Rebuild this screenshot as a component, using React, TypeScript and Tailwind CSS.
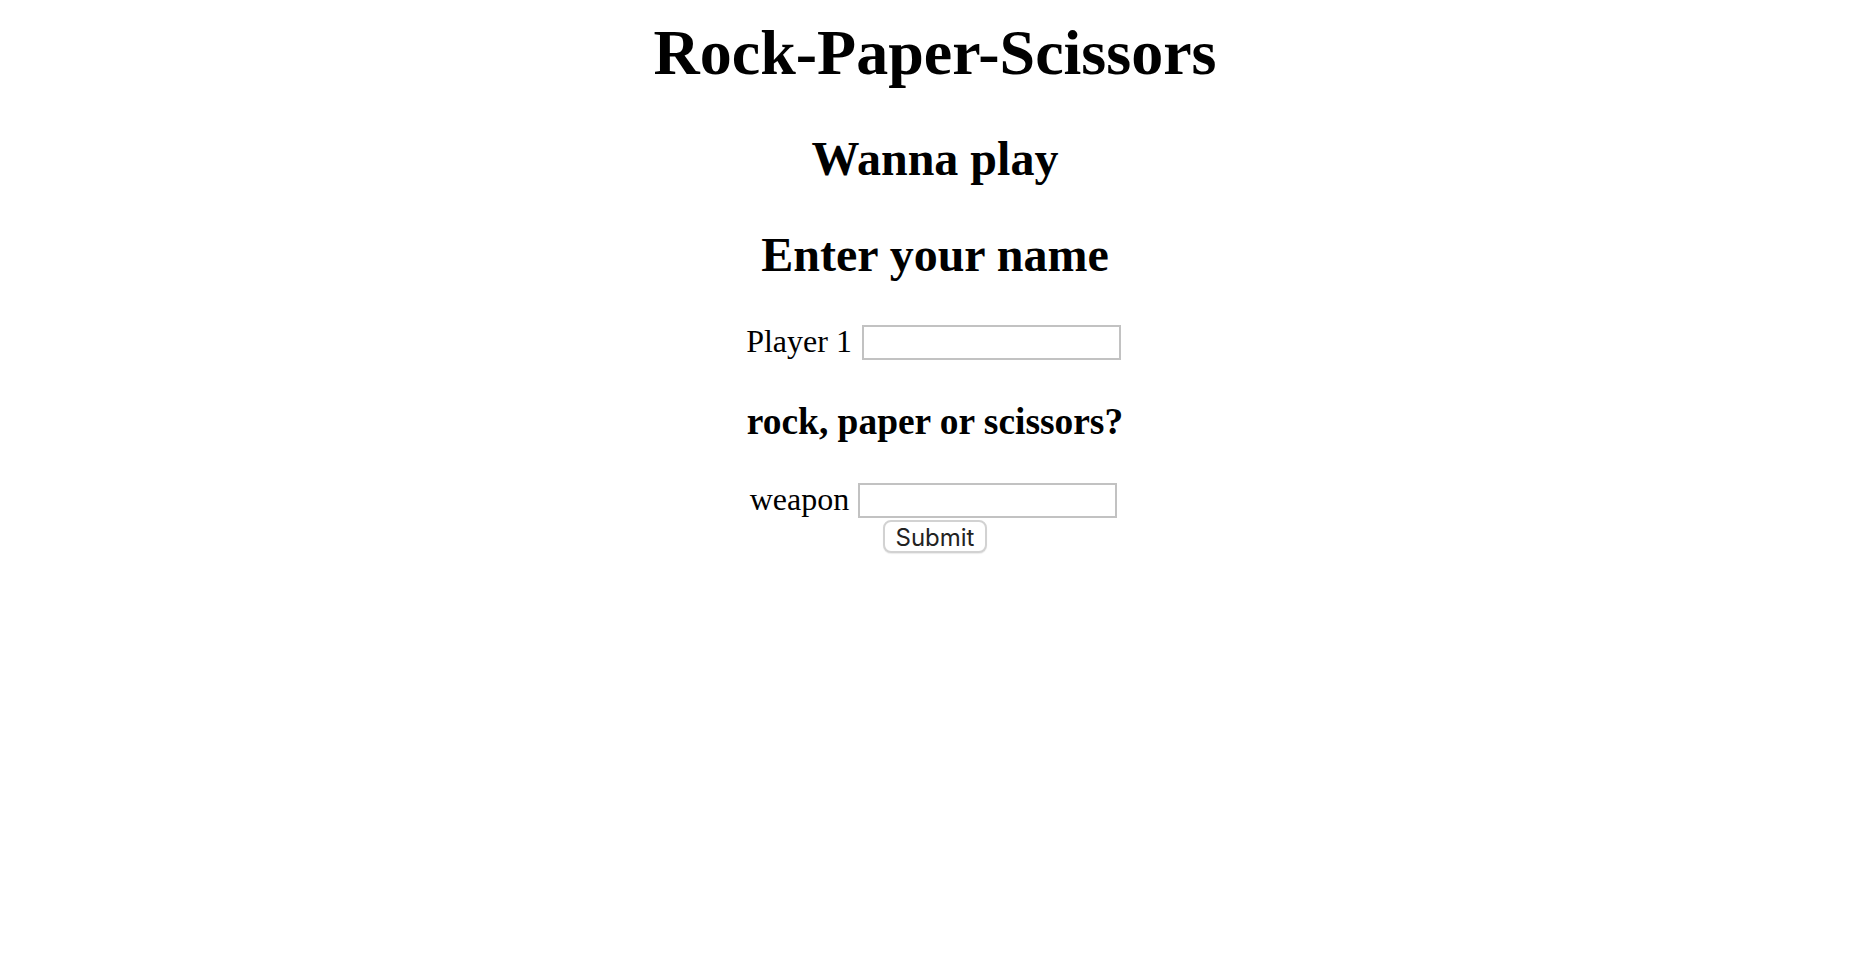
export default function App() {
  return (
    <div className="min-h-screen bg-white pr-[6px] pt-[17px] text-center text-black [font-family:'Liberation_Serif','Times_New_Roman',serif]">
      <h1 className="text-[64px] font-bold leading-[71px]">Rock-Paper-Scissors</h1>

      <h2 className="mt-[44px] text-[48px] font-bold leading-[53px]">Wanna play</h2>

      <h2 className="mt-[43px] text-[48px] font-bold leading-[53px]">Enter your name</h2>

      <form className="flex flex-col items-center" onSubmit={(e) => e.preventDefault()}>
        <div className="mt-[42px] mr-[3px] flex h-[37px] items-end justify-center gap-[10px]">
          <label className="text-[32px] leading-[37px]">Player 1</label>
          <input
            type="text"
            className="h-[35px] w-[259px] border-2 border-[#c2c2c2] bg-white px-1 text-[26px] outline-none"
          />
        </div>

        <h3 className="mt-[41px] text-[37.44px] font-bold leading-[41px]">rock, paper or scissors?</h3>

        <div className="mt-[39px] mr-[3px] flex h-[37px] items-end justify-center gap-[9px]">
          <label className="text-[32px] leading-[37px]">weapon</label>
          <input
            type="text"
            className="h-[35px] w-[259px] border-2 border-[#c2c2c2] bg-white px-1 text-[26px] outline-none"
          />
        </div>

        <button
          type="submit"
          className="mt-[2px] flex h-[33px] w-[104px] items-center justify-center rounded-[8px] border-2 border-[#d2d2d2] bg-white pt-[2px] text-[24px] leading-none text-[#222] shadow-[0_1px_1px_rgba(0,0,0,0.08)] [font-family:Inter,'Liberation_Sans',sans-serif]"
        >
          Submit
        </button>
      </form>
    </div>
  );
}
